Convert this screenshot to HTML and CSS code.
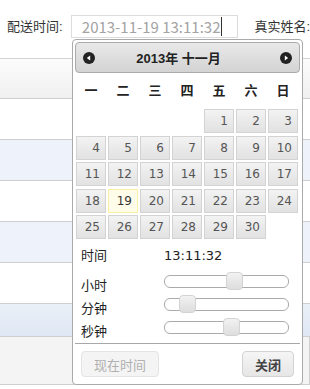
FILE: index.html
```html
<!DOCTYPE html>
<html lang="zh-CN">

<head>
    <meta charset="UTF-8">
    <title>订单查询</title>
    <link rel="stylesheet" href="styles.css">
</head>

<body>
    <main class="page">
        <form class="search">
            <label class="field-label">配送时间:</label>
            <div class="date-input">
                <span class="date-value">2013-11-19 13:11:32</span><span class="caret"></span>
            </div>
            <label class="field-label name-label">真实姓名:</label>
        </form>

        <div class="list">
            <div class="row row-head"></div>
            <div class="row"></div>
            <div class="row row-alt"></div>
            <div class="row"></div>
            <div class="row row-alt"></div>
            <div class="row"></div>
            <div class="row row-hover"></div>
            <div class="row row-foot"><span class="cell"></span><span class="cell"></span></div>
        </div>

        <div class="picker">
            <div class="picker-head">
                <a class="nav" title="上一月">
                    <svg width="12" height="12" viewBox="0 0 12 12"><circle cx="6" cy="6" r="6" fill="#222"/><polygon points="7.2,3.4 3.8,6 7.2,8.6" fill="#fff"/></svg>
                </a>
                <span class="title">2013年 十一月</span>
                <a class="nav" title="下一月">
                    <svg width="12" height="12" viewBox="0 0 12 12"><circle cx="6" cy="6" r="6" fill="#222"/><polygon points="4.8,3.4 8.2,6 4.8,8.6" fill="#fff"/></svg>
                </a>
            </div>

            <div class="weekdays">
                <span>一</span><span>二</span><span>三</span><span>四</span><span>五</span><span>六</span><span>日</span>
            </div>

            <div class="days">
                <span class="day empty"></span><span class="day empty"></span><span class="day empty"></span><span class="day empty"></span>
                <span class="day">1</span><span class="day">2</span><span class="day">3</span>
                <span class="day">4</span><span class="day">5</span><span class="day">6</span><span class="day">7</span>
                <span class="day">8</span><span class="day">9</span><span class="day">10</span>
                <span class="day">11</span><span class="day">12</span><span class="day">13</span><span class="day">14</span>
                <span class="day">15</span><span class="day">16</span><span class="day">17</span>
                <span class="day">18</span><span class="day today">19</span><span class="day">20</span><span class="day">21</span>
                <span class="day">22</span><span class="day">23</span><span class="day">24</span>
                <span class="day">25</span><span class="day">26</span><span class="day">27</span><span class="day">28</span>
                <span class="day">29</span><span class="day">30</span>
            </div>

            <div class="time">
                <div class="time-row time-now">
                    <span class="time-label">时间</span>
                    <span class="time-value">13:11:32</span>
                </div>
                <div class="time-row">
                    <span class="time-label">小时</span>
                    <div class="slider"><span class="handle" style="left: 56.5%"></span></div>
                </div>
                <div class="time-row">
                    <span class="time-label">分钟</span>
                    <div class="slider"><span class="handle" style="left: 18.6%"></span></div>
                </div>
                <div class="time-row">
                    <span class="time-label">秒钟</span>
                    <div class="slider"><span class="handle" style="left: 54.2%"></span></div>
                </div>
            </div>

            <div class="picker-foot">
                <button type="button" class="btn btn-off">现在时间</button>
                <button type="button" class="btn btn-close">关闭</button>
            </div>
        </div>
    </main>
</body>

</html>
```

FILE: styles.css
```css
body {
    margin: 0;
    background: #fff;
    color: #333;
    font-family: 'Liberation Sans', 'Noto Sans CJK SC', sans-serif;
    font-size: 13px;
}

.page {
    position: relative;
    width: 310px;
    height: 389px;
    overflow: hidden;
}

.search {
    display: flex;
    align-items: flex-start;
    height: 59px;
    margin: 0;
    padding-top: 15px;
    box-sizing: border-box;
    border-bottom: 1px solid #d2d2d2;
}

.field-label {
    line-height: 23px;
    white-space: nowrap;
    color: #333;
}

.search .field-label:first-child {
    width: 64px;
    margin-left: 7px;
}

.name-label {
    margin-left: 16px;
}

.date-input {
    display: flex;
    align-items: center;
    width: 168px;
    height: 23px;
    box-sizing: border-box;
    padding-left: 10px;
    border: 1px solid #dcdcdc;
    background: #fff;
}

.date-value {
    font-family: 'Noto Sans CJK SC', sans-serif;
    font-size: 15px;
    color: #a3a3a3;
    white-space: nowrap;
}

.caret {
    width: 1px;
    height: 19px;
    margin-left: 1px;
    background: #333;
}

.row {
    height: 40px;
    border-bottom: 1px solid #cfcfcf;
    background: #fff;
}

.row-head {
    height: 39px;
    background: linear-gradient(#fcfcfc, #f0f0f0);
}

.row-alt {
    background: #eef2fb;
}

.row-hover {
    height: 32px;
    background: linear-gradient(#ebf0f8, #dee7f4);
}

.row-foot {
    display: flex;
    height: 47px;
    background: #f4f4f4;
}

.row-foot .cell {
    width: 188px;
    border-right: 1px solid #cfcfcf;
}

.picker {
    position: absolute;
    left: 72px;
    top: 39px;
    width: 231px;
    box-sizing: border-box;
    padding: 2px;
    border: 1px solid #aaa;
    border-radius: 4px;
    background: #fff;
    color: #222;
}

.picker-head {
    display: flex;
    align-items: center;
    height: 31px;
    box-sizing: border-box;
    padding: 0 7px;
    border: 1px solid #aaa;
    border-radius: 4px;
    background: linear-gradient(#e9e9e9, #d3d3d3);
}

.nav {
    display: flex;
    cursor: pointer;
}

.title {
    flex: 1;
    padding-right: 18px;
    text-align: center;
    font-weight: bold;
    font-size: 13px;
    color: #222;
}

.weekdays,
.days {
    display: grid;
    grid-template-columns: repeat(7, 30px);
    column-gap: 2px;
    margin: 0 1px;
}

.weekdays span {
    line-height: 36px;
    text-align: center;
    font-weight: bold;
}

.days {
    grid-auto-rows: 24px;
    row-gap: 2.5px;
}

.day {
    box-sizing: border-box;
    padding-right: 5px;
    border: 1px solid #d3d3d3;
    background: linear-gradient(#f3f3f3, #e9e9e9 55%, #e2e2e2);
    color: #555;
    text-align: right;
    line-height: 22px;
    font-family: 'DejaVu Sans', sans-serif;
    font-size: 12px;
}

.day.empty {
    border: none;
    background: none;
}

.day.today {
    border-color: #fcefa1;
    background: #fffde9;
    color: #363636;
}

.time {
    padding-left: 6px;
}

.time-row {
    display: grid;
    grid-template-columns: 83px 125px;
    height: 23px;
}

.time-now {
    height: 20px;
    margin: 7px 0 6px;
    line-height: 20px;
}

.time-label {
    line-height: 16px;
    margin-top: 6px;
}

.time-now .time-label {
    line-height: 20px;
    margin-top: 0;
}

.time-value {
    font-family: 'DejaVu Sans', sans-serif;
    font-size: 13px;
    color: #222;
}

.slider {
    position: relative;
    height: 13px;
    margin-top: 3px;
    box-sizing: border-box;
    border: 1px solid #aaa;
    border-radius: 6px;
    background: #fff;
}

.handle {
    position: absolute;
    top: -4px;
    width: 17px;
    height: 18px;
    margin-left: -8.5px;
    box-sizing: border-box;
    border: 1px solid #d3d3d3;
    border-radius: 4px;
    background: linear-gradient(#f2f2f2, #e6e6e6 55%, #dedede);
}

.picker-foot {
    display: flex;
    justify-content: space-between;
    margin-top: 2px;
    padding: 7px 6px 5px;
    border-top: 1px solid #a8a8a8;
}

.btn {
    height: 26px;
    padding: 0 12px;
    border: 1px solid #d3d3d3;
    border-radius: 4px;
    background: linear-gradient(#f5f5f5, #e6e6e6);
    font-family: 'Liberation Sans', 'Noto Sans CJK SC', sans-serif;
    font-size: 13px;
    cursor: pointer;
}

.btn-off {
    border-color: #e4e4e4;
    background: #f4f4f4;
    color: #b0b0b0;
    cursor: default;
}

.btn-close {
    font-weight: bold;
    color: #444;
}
```
